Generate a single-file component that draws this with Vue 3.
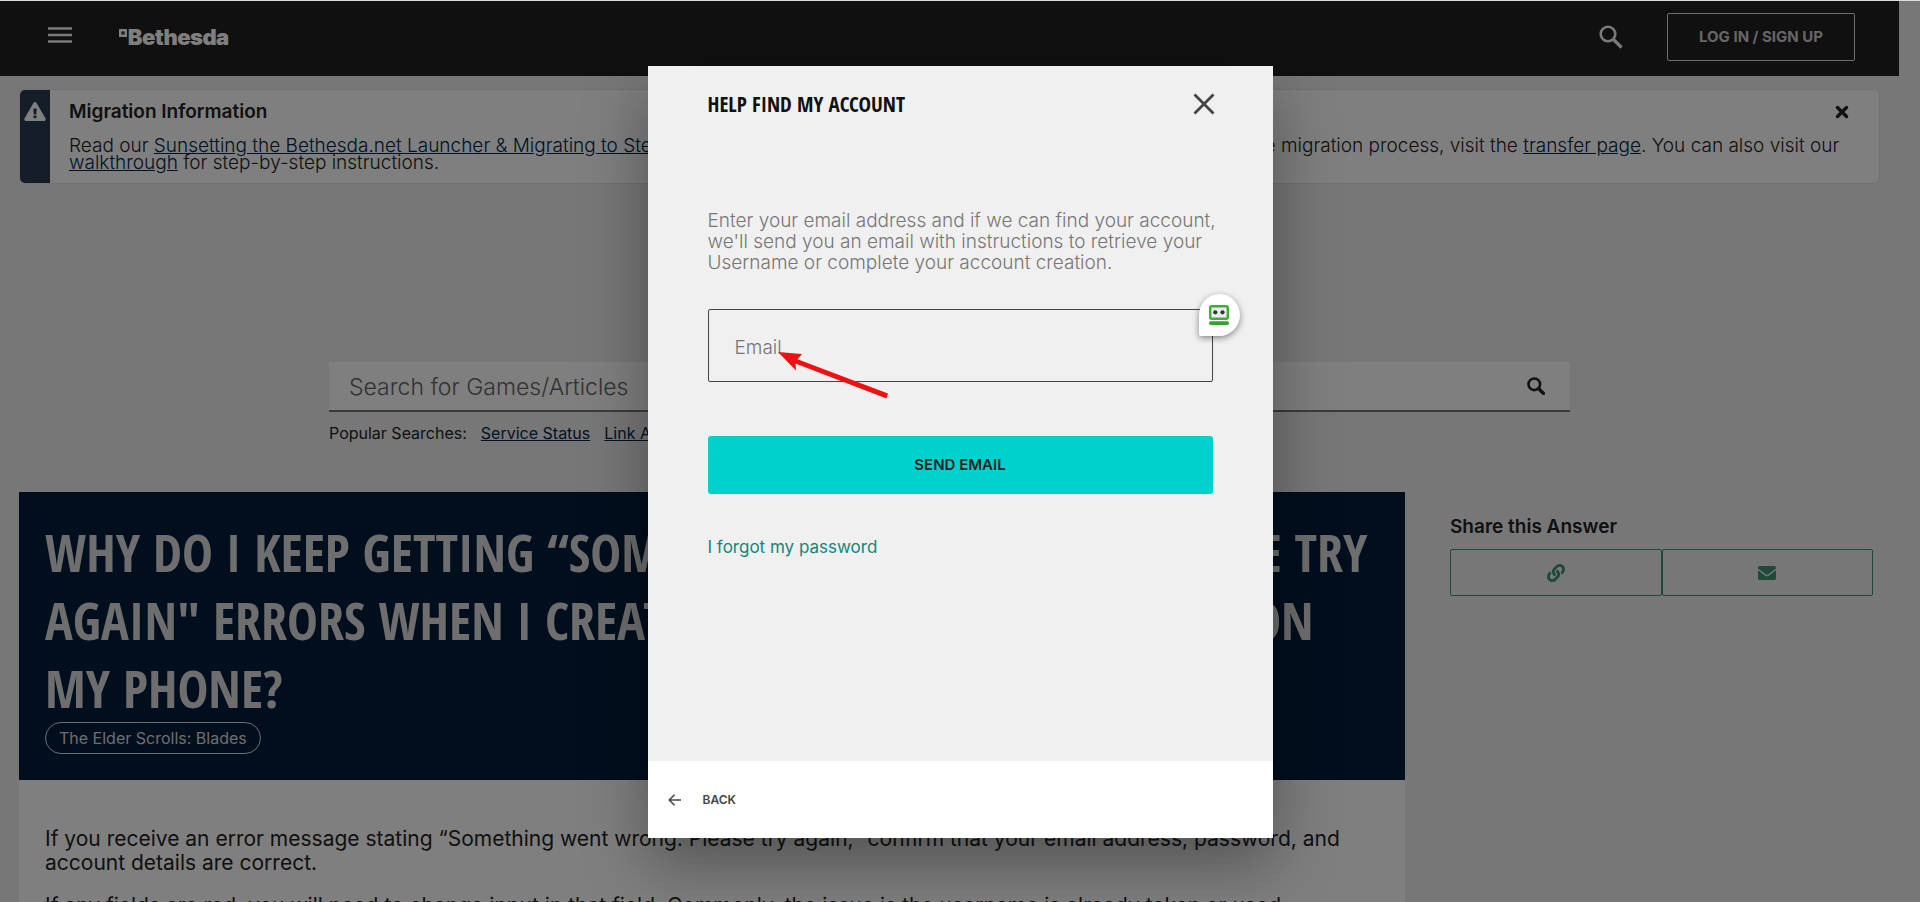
<script setup>
import { ref } from 'vue'

const search = ref('')
const email = ref('')
</script>

<template>
  <div class="page">
    <div class="site">
      <header class="topbar">
        <button class="icon-btn menu" type="button" aria-label="Menu">
          <svg width="24" height="16" viewBox="0 0 24 16"><path d="M0 1.500h24M0 8h24M0 14.500h24" stroke="#f4f4f4" stroke-width="2.600" /></svg>
        </button>
        <a class="logo" href="#">
          <svg width="8" height="8" viewBox="0 0 8 8"><path d="M1.200 1.200h5.600v5.600H1.200z" fill="none" stroke="#fff" stroke-width="2.400" /><path d="M3.500 3.500h1v1h-1z" fill="#aaa" /></svg>
          <span>Bethesda</span>
        </a>
        <button class="icon-btn find" type="button" aria-label="Search">
          <svg width="24" height="24" viewBox="0 0 24 24"><circle cx="9" cy="9" r="7.3" fill="none" stroke="#f4f4f4" stroke-width="2.6" /><path d="M14.5 14.5L22.5 22.5" stroke="#f4f4f4" stroke-width="3.2" /></svg>
        </button>
        <button class="login" type="button">LOG IN / SIGN UP</button>
      </header>

      <section class="notice">
        <div class="notice-mark">
          <svg width="22" height="19" viewBox="0 0 576 512"><path fill="#fff" d="M569.5 440C588 472 564.800 512 527.900 512H48.100C11.200 512-12 472 6.500 440L246.400 24c18.500-32 64.700-32 83.200 0l239.900 416zM288 354a46 46 0 1 0 0 92 46 46 0 0 0 0-92zm-43.700-165.300l7.400 136c.4 6.400 5.700 11.300 12 11.300h48.600c6.300 0 11.600-4.900 12-11.300l7.400-136c.4-6.900-5.100-12.700-12-12.700h-63.400c-6.900 0-12.400 5.800-12 12.700z" /></svg>
        </div>
        <div class="notice-body">
          <h2>Migration Information</h2>
          <p>Read our <a href="#">Sunsetting the Bethesda.net Launcher &amp; Migrating to Steam FAQ</a> for more information on next steps. To begin and complete the migration process, visit the <a href="#">transfer page</a>. You can also visit our<br><a href="#">walkthrough</a> for step-by-step instructions.</p>
        </div>
        <button class="icon-btn dismiss" type="button" aria-label="Dismiss">
          <svg width="14" height="14" viewBox="0 0 14 14"><path d="M2.500 2.500l9 9M11.500 2.500l-9 9" stroke="#222" stroke-width="3.400" stroke-linecap="round" /></svg>
        </button>
      </section>

      <section class="search">
        <div class="search-box">
          <input v-model="search" type="text" placeholder="Search for Games/Articles" aria-label="Search for Games/Articles">
          <button class="icon-btn" type="button" aria-label="Go">
            <svg width="18" height="18" viewBox="0 0 18 18"><circle cx="7.300" cy="7.300" r="5.800" fill="none" stroke="#222" stroke-width="2.600" /><path d="M11.500 11.500l5 5" stroke="#222" stroke-width="3.200" stroke-linecap="round" /></svg>
          </button>
        </div>
        <div class="popular">
          <span>Popular Searches:</span>
          <a href="#">Service Status</a>
          <a href="#">Link Account</a>
        </div>
      </section>

      <main class="content">
        <article>
          <div class="hero">
            <h1>WHY DO I KEEP GETTING “SOMETHING WENT WRONG. PLEASE TRY<br>AGAIN" ERRORS WHEN I CREATE AN ACCOUNT AND SIGN IN ON<br>MY PHONE?</h1>
            <a class="pill" href="#">The Elder Scrolls: Blades</a>
          </div>
          <div class="answer">
            <p>If you receive an error message stating “Something went wrong. Please try again,” confirm that your email address, password, and<br>account details are correct.</p>
            <p>If any fields are red, you will need to change input in that field. Commonly, the issue is the username is already taken or used.</p>
          </div>
        </article>
        <aside>
          <h3>Share this Answer</h3>
          <div class="share">
            <button type="button" aria-label="Copy link">
              <svg width="18" height="18" viewBox="0 0 512 512"><path fill="#3c9471" d="M326.612 185.391c59.747 59.809 58.927 155.698.36 214.590-.11.120-.240.250-.360.370l-67.200 67.200c-59.270 59.270-155.699 59.262-214.960 0-59.270-59.260-59.270-155.700 0-214.960l37.106-37.106c9.840-9.840 26.786-3.300 27.294 10.606.648 17.722 3.826 35.527 9.690 52.721 1.986 5.822.567 12.262-3.783 16.612l-13.087 13.087c-28.026 28.026-28.905 73.660-1.155 101.960 28.024 28.579 74.086 28.749 102.325.510l67.200-67.190c28.191-28.191 28.073-73.757 0-101.830-3.701-3.694-7.429-6.564-10.341-8.569a16.037 16.037 0 0 1-6.947-12.606c-.396-10.567 3.348-21.456 11.698-29.806l21.054-21.055c5.521-5.521 14.182-6.199 20.584-1.731a152.482 152.482 0 0 1 20.522 17.197zM467.547 44.449c-59.261-59.262-155.690-59.270-214.960 0l-67.200 67.200c-.120.120-.250.250-.360.370-58.566 58.892-59.387 154.781.360 214.590a152.454 152.454 0 0 0 20.521 17.196c6.402 4.468 15.064 3.789 20.584-1.731l21.054-21.055c8.350-8.350 12.094-19.239 11.698-29.806a16.037 16.037 0 0 0-6.947-12.606c-2.912-2.005-6.640-4.875-10.341-8.569-28.073-28.073-28.191-73.639 0-101.830l67.200-67.190c28.239-28.239 74.300-28.069 102.325.510 27.750 28.300 26.872 73.934-1.155 101.960l-13.087 13.087c-4.350 4.350-5.769 10.790-3.783 16.612 5.864 17.194 9.042 34.999 9.690 52.721.509 13.906 17.454 20.446 27.294 10.606l37.106-37.106c59.271-59.259 59.271-155.699.001-214.959z" /></svg>
            </button>
            <button type="button" aria-label="Email">
              <svg width="18" height="14" viewBox="0 0 18 14"><path fill="#3c9471" d="M1.700 0h14.600A1.700 1.700 0 0 1 18 1.700v.9L10 8.600q-1 .7-2 0L0 2.600v-.9A1.700 1.700 0 0 1 1.700 0zM0 4.300l7.200 5.400q1.800 1.200 3.600 0L18 4.300v8A1.700 1.700 0 0 1 16.300 14H1.700A1.700 1.700 0 0 1 0 12.300z" /></svg>
            </button>
          </div>
        </aside>
      </main>
    </div>

    <div class="overlay">
      <div class="dialog" role="dialog" aria-labelledby="dialog-title">
        <div class="dialog-main">
          <div class="dialog-head">
            <h2 id="dialog-title">HELP FIND MY ACCOUNT</h2>
            <button class="icon-btn" type="button" aria-label="Close">
              <svg width="22" height="22" viewBox="0 0 22 22"><path d="M1.500 1.500l19 19M20.500 1.500l-19 19" stroke="#444" stroke-width="2.800" /></svg>
            </button>
          </div>
          <p>Enter your email address and if we can find your account,<br>we'll send you an email with instructions to retrieve your<br>Username or complete your account creation.</p>
          <div class="field">
            <input v-model="email" type="email" placeholder="Email" aria-label="Email">
            <div class="badge">
              <svg width="20" height="20" viewBox="0 0 20 20"><rect x="1.200" y="1.200" width="17.600" height="12.600" rx="1.500" fill="#e9ecf0" stroke="#3fae35" stroke-width="2.400" /><circle cx="6.300" cy="7.300" r="2.100" fill="#333" /><circle cx="13.500" cy="7.300" r="2.100" fill="#333" /><rect x="0" y="16.200" width="20" height="3.800" rx="1.800" fill="#32a528" /></svg>
            </div>
            <svg class="pointer" width="112" height="48" viewBox="0 0 112 48"><path d="M1 1L25 3L20.500 8.300L111 42.500L109.500 47.500L18.500 12.500L19 19.500z" fill="#ee1111" /></svg>
          </div>
          <button class="send" type="button">SEND EMAIL</button>
          <a class="forgot" href="#">I forgot my password</a>
        </div>
        <div class="dialog-foot">
          <button type="button">
            <svg width="13" height="12" viewBox="0 0 13 12"><path d="M13 6H1.500M6.500 .7L1.200 6l5.300 5.300" fill="none" stroke="#444" stroke-width="1.500" /></svg>
            <span>BACK</span>
          </button>
        </div>
      </div>
    </div>
  </div>
</template>

<style>
body {
  background: #eee;
}
</style>

<style scoped>
* {
  box-sizing: border-box;
}
h1, h2, h3, p {
  margin: 0;
}
button, input {
  font-family: inherit;
}
button {
  cursor: pointer;
}
a {
  color: #00264d;
}
svg {
  display: block;
  flex: none;
}
.page {
  position: relative;
  height: 100vh;
  overflow: hidden;
  border-top: 1px solid #d9dedb;
  font-family: Inter, "Open Sans", sans-serif;
  color: #222;
}
.site {
  padding-right: 21px;
}
.icon-btn {
  border: 0;
  padding: 0;
  background: none;
}
.topbar {
  display: flex;
  align-items: center;
  height: 75px;
  padding: 0 44px 4px 48px;
  background: #202020;
}
.menu {
  margin-bottom: 4px;
}
.logo {
  display: flex;
  gap: 1px;
  margin-left: 47px;
  color: #fff;
  font: 900 22px/24px "Inter Tight", Inter, sans-serif;
  text-decoration: none;
}
.logo svg {
  margin-top: 4px;
}
.find {
  margin-left: auto;
}
.login {
  width: 188px;
  height: 48px;
  margin-left: 44px;
  border: 1px solid #ddd;
  border-radius: 2px;
  background: none;
  color: #ccc;
  font-size: 15px;
  font-weight: 700;
}
.notice {
  display: flex;
  align-items: flex-start;
  margin: 13px 19px 0;
  overflow: hidden;
  border: 1px solid #e2e2e2;
  border-radius: 6px;
  background: #fff;
}
.notice-mark {
  display: flex;
  flex: none;
  align-self: stretch;
  justify-content: center;
  width: 30px;
  padding-top: 12px;
  background: #2b3a52;
}
.notice-body {
  flex: 1;
  min-width: 0;
  padding: 12px 0 12px 19px;
  white-space: nowrap;
}
.notice-body h2 {
  font-size: 19px;
  font-weight: 600;
  line-height: 20px;
}
.notice-body p {
  padding-top: 15px;
  font-size: 19px;
  font-weight: 300;
  line-height: 17px;
}
.dismiss {
  margin: 15px 30px 0 0;
}
.search {
  max-width: 1241px;
  margin: 178px auto 0;
}
.search-box {
  display: flex;
  align-items: center;
  padding-right: 25px;
  border-bottom: 2px solid #777;
  background: #fff;
}
.search-box input {
  flex: 1;
  height: 48px;
  padding: 2px 20px 0;
  border: 0;
  outline: 0;
  background: none;
  font-size: 23px;
  font-weight: 300;
}
.search-box input::placeholder {
  color: #666;
}
.popular {
  display: flex;
  gap: 14px;
  padding-top: 11px;
  font-size: 16px;
  line-height: 20px;
}
.content {
  display: grid;
  grid-template-columns: minmax(0, 1386fr) minmax(0, 423fr);
  gap: 45px;
  margin: 49px 26px 0 19px;
}
.hero {
  padding: 26px 26px;
  background: #001d3a;
}
.hero h1 {
  color: #dcdcdc;
  font: 700 52px/68px "Open Sans Condensed", "Roboto Condensed", sans-serif;
  white-space: nowrap;
}
.pill {
  display: inline-block;
  padding: 5px 13px;
  border: 1px solid #dcdcdc;
  border-radius: 16px;
  color: #dcdcdc;
  font-size: 16px;
  line-height: 20px;
  text-decoration: none;
}
.answer {
  padding: 47px 26px;
  background: #fff;
}
.answer p {
  margin-bottom: 19px;
  font-size: 21px;
  font-weight: 400;
  line-height: 24px;
  white-space: nowrap;
}
aside h3 {
  padding-top: 24px;
  font-size: 19px;
  font-weight: 600;
  line-height: 22px;
}
.share {
  display: flex;
  padding-top: 11px;
}
.share button {
  display: flex;
  flex: 1;
  align-items: center;
  justify-content: center;
  height: 47px;
  border: 1px solid #3c9471;
  border-radius: 2px;
  background: none;
}
.overlay {
  position: absolute;
  inset: 0;
  display: flex;
  align-items: flex-start;
  justify-content: center;
  padding-top: 65px;
  background: rgba(0, 0, 0, .5);
}
.dialog {
  width: 625px;
  background: #f0f0f0;
  box-shadow: 0 25px 60px rgba(0, 0, 0, .35);
}
.dialog-main {
  padding: 24px 60px 202px;
}
.dialog-head {
  display: flex;
  align-items: center;
  justify-content: space-between;
  margin-right: -2px;
}
.dialog-head h2 {
  color: #111;
  font: 700 21px/28px "Open Sans Condensed", "Roboto Condensed", sans-serif;
}
.dialog p {
  padding-top: 92px;
  color: #777;
  font-size: 19px;
  font-weight: 300;
  line-height: 21px;
  white-space: nowrap;
}
.field {
  position: relative;
  margin-top: 36px;
}
.field input {
  display: block;
  width: 100%;
  height: 73px;
  padding: 4px 26px 0;
  border: 1px solid #444;
  border-radius: 2px;
  outline: 0;
  background: none;
  font-size: 19px;
  font-weight: 300;
}
.field input::placeholder {
  color: #757575;
}
.badge {
  position: absolute;
  top: -15px;
  right: -27px;
  display: flex;
  align-items: center;
  justify-content: center;
  width: 41px;
  height: 42px;
  border-radius: 50% 50% 50% 2px;
  background: #fff;
  box-shadow: 0 2px 6px rgba(0, 0, 0, .45);
}
.pointer {
  position: absolute;
  top: 42px;
  left: 69px;
}
.send {
  width: 100%;
  height: 58px;
  margin-top: 54px;
  padding-bottom: 3px;
  border: 0;
  border-radius: 3px;
  background: #00d1cd;
  color: #222;
  font-size: 15px;
  font-weight: 600;
}
.forgot {
  display: block;
  margin-top: 42px;
  color: #16857b;
  font-size: 17px;
  line-height: 23px;
  text-decoration: none;
}
.dialog-foot {
  padding: 22px 20px;
  background: #fff;
}
.dialog-foot button {
  display: flex;
  align-items: center;
  gap: 22px;
  height: 33px;
  padding: 0;
  border: 0;
  background: none;
  color: #444;
  font-size: 12px;
  font-weight: 600;
}
</style>
